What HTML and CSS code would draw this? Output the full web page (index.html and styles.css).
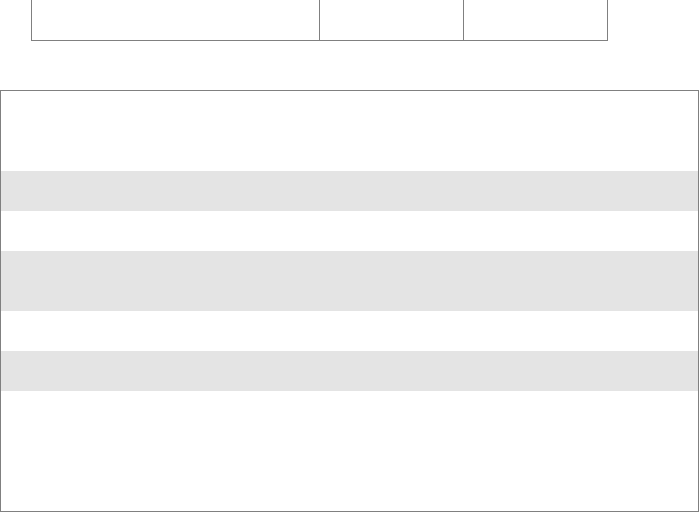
FILE: index.html
```html
<!DOCTYPE html>
<html>
<head>
<meta charset="utf-8">
<link rel="stylesheet" href="styles.css">
</head>
<body>
<table class="top">
<tr><td class="c1"></td><td class="c2"></td><td class="c3"></td></tr>
</table>
<div class="box">
<div class="row r-tall"></div>
<div class="row stripe"></div>
<div class="row"></div>
<div class="row stripe r-mid"></div>
<div class="row"></div>
<div class="row stripe"></div>
<div class="row r-end"></div>
</div>
</body>
</html>
```
FILE: styles.css
```css
html, body { margin: 0; padding: 0; background: #fff; font-family: "Liberation Sans", Arial, sans-serif; }
body { width: 699px; height: 512px; overflow: hidden; }
.top { border-collapse: collapse; margin-left: 31px; }
.top td { height: 40px; padding: 0; border: 1px solid #808080; border-top: none; box-sizing: border-box; }
.top .c1 { width: 288px; }
.top .c2 { width: 144px; }
.top .c3 { width: 144px; }
.box { margin-top: 49px; width: 699px; height: 422px; box-sizing: border-box; border: 1px solid #808080; display: flex; flex-direction: column; }
.row { height: 40px; flex: none; }
.r-tall { height: 80px; }
.r-mid { height: 60px; }
.r-end { flex: 1; }
.stripe { background: #e4e4e4; }
```
